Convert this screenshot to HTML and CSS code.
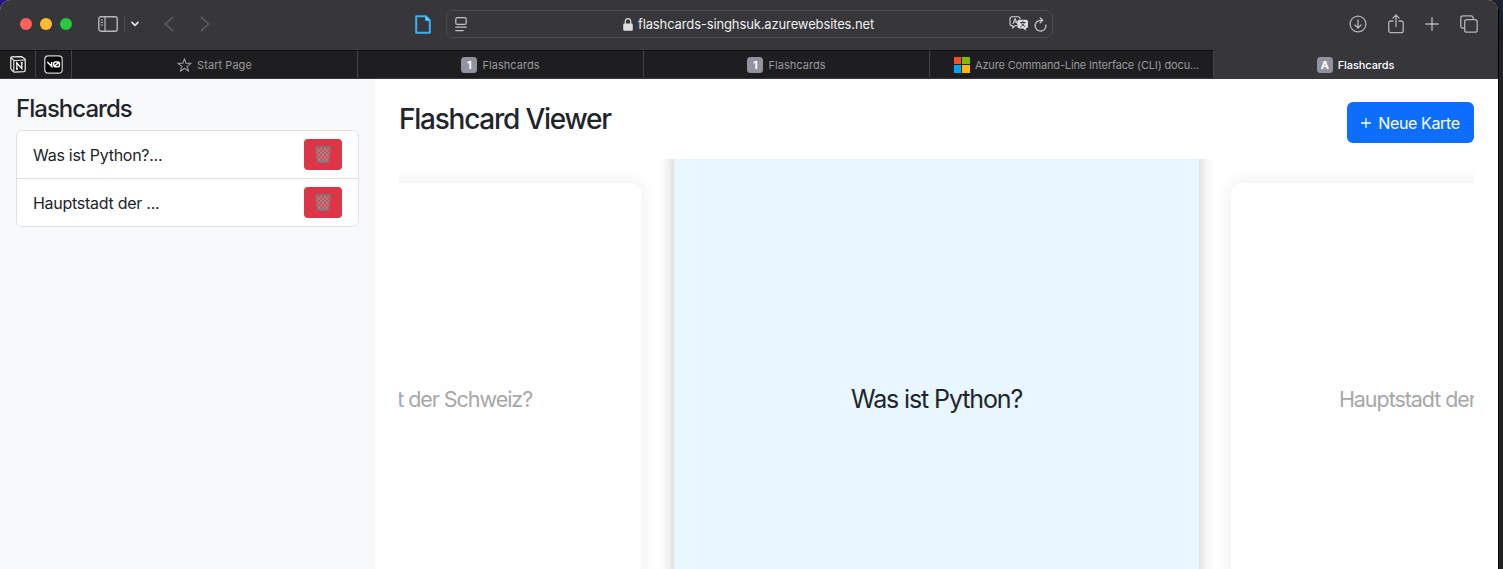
FILE: index.html
```html
<!DOCTYPE html>
<html lang="de">
<head>
<meta charset="utf-8">
<title>Flashcards</title>
<link rel="stylesheet" href="styles.css">
</head>
<body>
<div class="desktop">
<div class="window">
  <header class="toolbar">
    <div class="lights"><i class="red"></i><i class="yellow"></i><i class="green"></i></div>
    <svg class="sidebar-icon" width="20" height="16" viewBox="0 0 20 16" fill="none" stroke="#b9b9bb" stroke-width="1.4"><rect x=".8" y=".8" width="18.4" height="14.4" rx="2"/><path d="M7 1v14M2.8 4h2.2M2.8 6.5h2.2M2.8 9h2.2" stroke-width="1.2"/></svg>
    <span class="divider"></span>
    <svg class="chevron" width="8" height="6" viewBox="0 0 8 6" fill="none" stroke="#e2e2e3" stroke-width="1.7" stroke-linecap="round" stroke-linejoin="round"><path d="M1 1.3l3 3 3-3"/></svg>
    <svg class="back" width="10" height="16" viewBox="0 0 10 16" fill="none" stroke="#5f5f63" stroke-width="1.5" stroke-linecap="round" stroke-linejoin="round"><path d="M8.6 1.4L1.3 8l7.3 6.6"/></svg>
    <svg class="forward" width="10" height="16" viewBox="0 0 10 16" fill="none" stroke="#5f5f63" stroke-width="1.5" stroke-linecap="round" stroke-linejoin="round"><path d="M1.4 1.4L8.7 8l-7.3 6.6"/></svg>
    <svg class="page-icon" width="16" height="19" viewBox="0 0 16 19" fill="none" stroke="#35b3fa" stroke-width="2" stroke-linejoin="round"><path d="M1.2 1.2h9.6l4 4v12.6H1.2z"/><path d="M10.5 1.5v4h4" fill="#7fd0ff" stroke-width="1"/></svg>
    <div class="address">
      <svg width="12" height="15" viewBox="0 0 12 15" fill="none" stroke="#c4c4c6" stroke-width="1.2" stroke-linecap="round"><rect x=".8" y=".7" width="10.4" height="6.6" rx="1.6"/><path d="M.8 10.2h10.4M.8 13.6h7.4"/></svg>
      <div class="host">
        <svg width="10" height="13" viewBox="0 0 10 13"><rect x=".2" y="5.6" width="9.6" height="7.2" rx="1.3" fill="#dededf"/><path d="M2.3 6V3.6a2.7 2.9 0 0 1 5.4 0V6" fill="none" stroke="#dededf" stroke-width="1.2"/></svg>
        <span class="url">flashcards-singhsuk.azurewebsites.net</span>
      </div>
      <svg class="translate" width="20" height="16" viewBox="0 0 20 16" fill="none" stroke="#d4d4d6" stroke-width="1.1" stroke-linecap="round" stroke-linejoin="round"><path d="M8 9.7H6L3.7 12V9.7H3A2 2 0 0 1 1 7.7V2.8a2 2 0 0 1 2-2h6a2 2 0 0 1 2 2"/><path d="M4 7.6L6.1 2.6l2.1 5M4.7 6h2.8"/><path d="M10.2 3.8h7a1.8 1.8 0 0 1 1.8 1.8v5a1.8 1.8 0 0 1-1.8 1.8h-.5v2.4l-2.5-2.4h-4a1.8 1.8 0 0 1-1.8-1.8v-5a1.8 1.8 0 0 1 1.8-1.8z" fill="#dcdcde" stroke="none"/><path d="M11.4 6.500h4.800M13.800 5.300v1M15.300 6.800c-.5 1.700-1.700 2.900-3.500 3.600M12.300 6.800c.5 1.700 1.800 2.900 3.600 3.600" stroke="#37363b" stroke-width=".9"/></svg>
      <svg class="reload" width="13" height="15" viewBox="0 0 13 15" fill="none" stroke="#c4c4c6" stroke-width="1.3" stroke-linecap="round" stroke-linejoin="round"><path d="M11.9 8A5.400 5.400 0 1 1 6.500 3.300h1.800"/><path d="M6.200.9l2.500 2.400-2.500 2.500"/></svg>
    </div>
    <div class="actions">
      <svg width="18" height="18" viewBox="0 0 18 18" fill="none" stroke="#b4b4b7" stroke-width="1.3" stroke-linecap="round" stroke-linejoin="round"><circle cx="9" cy="9" r="7.9"/><path d="M9 4.8v8M6 10l3 3 3-3"/></svg>
      <svg width="16" height="20" viewBox="0 0 16 20" fill="none" stroke="#b4b4b7" stroke-width="1.3" stroke-linecap="round" stroke-linejoin="round"><path d="M5 7H2.7A1.9 1.9 0 0 0 .8 8.900v7.800a1.900 1.900 0 0 0 1.900 1.900h10.600a1.900 1.900 0 0 0 1.900-1.900V8.900A1.900 1.900 0 0 0 13.300 7H11M8 12.500V1.300M4.900 4.100L8 1l3.100 3.100"/></svg>
      <svg width="14" height="14" viewBox="0 0 14 14" stroke="#b4b4b7" stroke-width="1.4" stroke-linecap="round"><path d="M7 .8v12.400M.8 7h12.400"/></svg>
      <svg width="18" height="18" viewBox="0 0 18 18" fill="none" stroke="#b4b4b7" stroke-width="1.3" stroke-linejoin="round"><rect x="4.700" y="4.700" width="12.500" height="12.500" rx="2.200"/><path d="M4.500 13.200H3A2.200 2.200 0 0 1 .8 11V3A2.200 2.200 0 0 1 3 .8h8A2.200 2.200 0 0 1 13.200 3v1.500"/></svg>
    </div>
  </header>

  <nav class="tabs">
    <div class="pinned">
      <svg width="16" height="17" viewBox="0 0 16 17"><path d="M1.800.9L11.800.7l3.400 2.600v10.900q0 1.300-1.300 1.400l-9.500.5q-1 0-1.500-.8L.8 12.700V1.900q0-1 1-1z" fill="#19191a" stroke="#f1f1f1" stroke-width="1.200" stroke-linejoin="round"/><path d="M15 4l-10.200.5q-1 .1-1 1v10M1.200 1.800l2.900 2.900" fill="none" stroke="#f1f1f1" stroke-width="1.100"/><path d="M6.900 12.900V7l4.900 5.600V6.500M6 7h1.300M6 13h1.900M10.800 6.600h1.900" fill="none" stroke="#fff" stroke-width="1.300"/></svg>
    </div>
    <div class="pinned">
      <svg width="19" height="19" viewBox="0 0 19 19"><rect x=".8" y=".8" width="17.400" height="17.400" rx="3.500" fill="#000" stroke="#d5d5d5" stroke-width="1.200"/><path d="M3.300 7l4.400 4.400V7M9.800 10.500V8.400A1.300 1.300 0 0 1 11.100 7h3a1.300 1.300 0 0 1 1.300 1.300v2.100a1.300 1.300 0 0 1-1.300 1.300h-3a1.300 1.300 0 0 1-1.300-1.200zM10.200 11.400L15 7.300" fill="none" stroke="#fff" stroke-width="1.500"/></svg>
    </div>
    <div class="tab">
      <svg width="15" height="14" viewBox="0 0 15 14" fill="none" stroke="#98989b" stroke-width="1.100" stroke-linejoin="round"><path d="M7.500.7l1.600 4.600 5 .1-4 3 1.500 4.800-4.100-2.900-4.100 2.900 1.500-4.800-4-3 5-.1z"/></svg>
      <span class="start">Start Page</span>
    </div>
    <div class="tab"><b class="badge">1</b><span>Flashcards</span></div>
    <div class="tab"><b class="badge">1</b><span>Flashcards</span></div>
    <div class="tab docs">
      <span class="ms"><i></i><i></i><i></i><i></i></span><span class="azure">Azure Command-Line Interface (CLI) docu...</span>
    </div>
    <div class="tab active"><b class="badge">A</b><span>Flashcards</span></div>
  </nav>

  <div class="page">
    <aside class="sidebar">
      <h4>Flashcards</h4>
      <ul class="list">
        <li><span class="item-one">Was ist Python?...</span><button class="delete"><svg width="18" height="19" viewBox="0 0 18 19" fill="none"><path d="M1.500 2L3.600 17.200q5.400 1.600 10.800 0L16.500 2z" fill="#b5616a" opacity=".65"/><path d="M3 3l11 13M6 2.500l9 10M10 2.500l6 6M2.500 7l9 10.500M3.200 12l4 5M15 3L4 16M12 2.500l-9 10M8 2.500L2 8M15.500 7L7 17.500M15 12l-4 5" stroke="#b3a0a2" stroke-width=".6"/><path d="M1.500 2L3.600 17M16.500 2L14.400 17" stroke="#80777a" stroke-width="1"/><path d="M3.600 16.800q5.400 1.700 10.800 0M1 1.700h16" stroke="#70797c" stroke-width="1.400"/></svg></button></li>
        <li><span class="item-two">Hauptstadt der ...</span><button class="delete"><svg width="18" height="19" viewBox="0 0 18 19" fill="none"><path d="M1.500 2L3.600 17.200q5.400 1.600 10.800 0L16.500 2z" fill="#b5616a" opacity=".65"/><path d="M3 3l11 13M6 2.500l9 10M10 2.500l6 6M2.500 7l9 10.500M3.200 12l4 5M15 3L4 16M12 2.500l-9 10M8 2.500L2 8M15.500 7L7 17.500M15 12l-4 5" stroke="#b3a0a2" stroke-width=".6"/><path d="M1.500 2L3.600 17M16.500 2L14.400 17" stroke="#80777a" stroke-width="1"/><path d="M3.600 16.800q5.400 1.700 10.800 0M1 1.700h16" stroke="#70797c" stroke-width="1.400"/></svg></button></li>
      </ul>
    </aside>
    <main class="viewer">
      <div class="viewer-head">
        <h3>Flashcard Viewer</h3>
        <button class="new-card"><svg width="10" height="10" viewBox="0 0 10 10" stroke="#fff" stroke-width="1.300"><path d="M5 0v10M0 5h10"/></svg><span>Neue Karte</span></button>
      </div>
      <div class="carousel">
        <article class="card side"><span>Hauptstadt der Schweiz?</span></article>
        <article class="card current"><span>Was ist Python?</span></article>
        <article class="card side"><span>Hauptstadt der Schweiz?</span></article>
      </div>
    </main>
  </div>
</div>
</div>
</body>
</html>
```

FILE: styles.css
```css
* { box-sizing: border-box; }
body {
  margin: 0;
  overflow: hidden;
  font-family: Inter, "Liberation Sans", sans-serif;
  color: #212529;
}
svg { display: block; flex: none; }
h3, h4, ul { margin: 0; padding: 0; }
button { border: 0; font: inherit; color: #fff; }
span { white-space: nowrap; }

.desktop {
  width: 1503px;
  height: 569px;
  padding-right: 5px;
  background: linear-gradient(90deg, #21158a 0 20px, transparent 20px), linear-gradient(#1d2230 0 10px, #191a1b 40px, #202223 41px);
}
.window {
  height: 569px;
  display: flex;
  flex-direction: column;
  overflow: hidden;
  border-radius: 10px 10px 0 0;
  background: #fff;
  box-shadow: 1px 0 0 #000;
}

.toolbar {
  height: 50px;
  flex: none;
  display: flex;
  align-items: center;
  padding: 0 20px 2px;
  background: #37363b;
}
.lights { display: flex; gap: 8px; }
.lights i { width: 12px; height: 12px; border-radius: 50%; }
.red { background: #ff5f57; }
.yellow { background: #febc2e; }
.green { background: #28c840; }
.sidebar-icon { margin-left: 26px; }
.divider { width: 1px; height: 18px; margin-left: 6px; background: #4a494e; }
.chevron { margin-left: 6px; }
.back { margin-left: 25px; }
.forward { margin-left: 26px; }
.page-icon { margin-left: 205px; }
.address {
  width: 607px;
  height: 28px;
  margin-left: 15px;
  padding: 0 5px 0 8px;
  display: flex;
  align-items: center;
  border: 1px solid #4b4a4f;
  border-radius: 7px;
}
.host { display: flex; align-items: center; gap: 5px; margin: 0 auto 0 156px; }
.url { font-size: 13px; color: #f0f0f1; letter-spacing: -.13px; }
.reload { margin-left: 5px; }
.actions { display: flex; align-items: center; margin-left: auto; gap: 21px; }

.tabs {
  height: 29px;
  flex: none;
  display: flex;
  background: #1e1e20;
  color: #98989b;
  font-size: 11px;
  letter-spacing: .05px;
}
.tabs > div {
  display: flex;
  align-items: center;
  justify-content: center;
  border-right: 1px solid #434346;
  border-top: 1px solid #121213;
  border-bottom: 1px solid #38383b;
}
.pinned { width: 36px; flex: none; }
.tab { width: 286px; flex: none; gap: 5px; min-width: 0; }
.tabs > .active {
  flex: 1;
  background: #37363b;
  border-color: #37363b;
  color: #fff;
  font-weight: 500;
  letter-spacing: -.1px;
}
.badge {
  width: 16px;
  height: 16px;
  border-radius: 3.5px;
  background: #9292a0;
  color: #fff;
  font-size: 11px;
  line-height: 16px;
  text-align: center;
}
.docs { width: 284px; padding-left: 10px; letter-spacing: -.15px; }
.ms { display: grid; grid-template-columns: 7.5px 7.5px; gap: 1px; }
.ms i { height: 7.5px; background: #f25022; }
.ms i:nth-child(2) { background: #7fba00; }
.ms i:nth-child(3) { background: #00a4ef; }
.ms i:nth-child(4) { background: #ffb900; }

.page { flex: 1; display: flex; min-height: 0; }
.sidebar { width: 375px; flex: none; padding: 16px; background: #f8f9fa; }
h4 { font-size: 24px; font-weight: 500; line-height: 28px; letter-spacing: -.98px; margin-bottom: 7px; }
.list {
  width: 343px;
  list-style: none;
  border: 1px solid #dee2e6;
  border-radius: 6px;
  background: #fff;
  font-size: 16px;
  letter-spacing: -.27px;
}
.list li {
  height: 47px;
  display: flex;
  align-items: center;
  justify-content: space-between;
  padding: 0 16px;
}
.list li + li { height: 48px; border-top: 1px solid #dee2e6; }
.delete {
  width: 38px;
  height: 31px;
  padding: 0;
  display: grid;
  place-items: center;
  border-radius: 4px;
  background: #dc3545;
}

.viewer { flex: 1; min-width: 0; padding: 23px 24px 0; display: flex; flex-direction: column; }
.viewer-head { height: 57px; flex: none; display: flex; justify-content: space-between; align-items: flex-start; }
h3 { font-size: 28px; font-weight: 500; line-height: 35px; letter-spacing: -1.24px; }
.new-card {
  width: 127px;
  height: 41px;
  padding: 0;
  display: flex;
  align-items: center;
  justify-content: center;
  gap: 7px;
  border-radius: 6px;
  background: #0d6efd;
  font-size: 16px;
  letter-spacing: -.38px;
}
.carousel {
  flex: 1;
  min-height: 0;
  display: flex;
  justify-content: center;
  align-items: flex-start;
  gap: 32px;
  overflow: hidden;
}
.card {
  flex: none;
  display: grid;
  place-items: center;
  padding-bottom: 2px;
  border-radius: 10px;
}
.side {
  width: 448px;
  height: 434px;
  margin-top: 24px;
  background: #fefefe;
  box-shadow: 0 0 18px rgba(0, 0, 0, .08);
  color: #a6a8a9;
  font-size: 21.500px;
  letter-spacing: -1.05px;
}
.side span { padding-right: 2px; }
.current {
  width: 525px;
  height: 522px;
  margin-top: -20px;
  background: #e7f6ff;
  box-shadow: 0 0 16px rgba(0, 0, 0, .24);
  font-size: 25px;
  letter-spacing: -1.12px;
}
```
